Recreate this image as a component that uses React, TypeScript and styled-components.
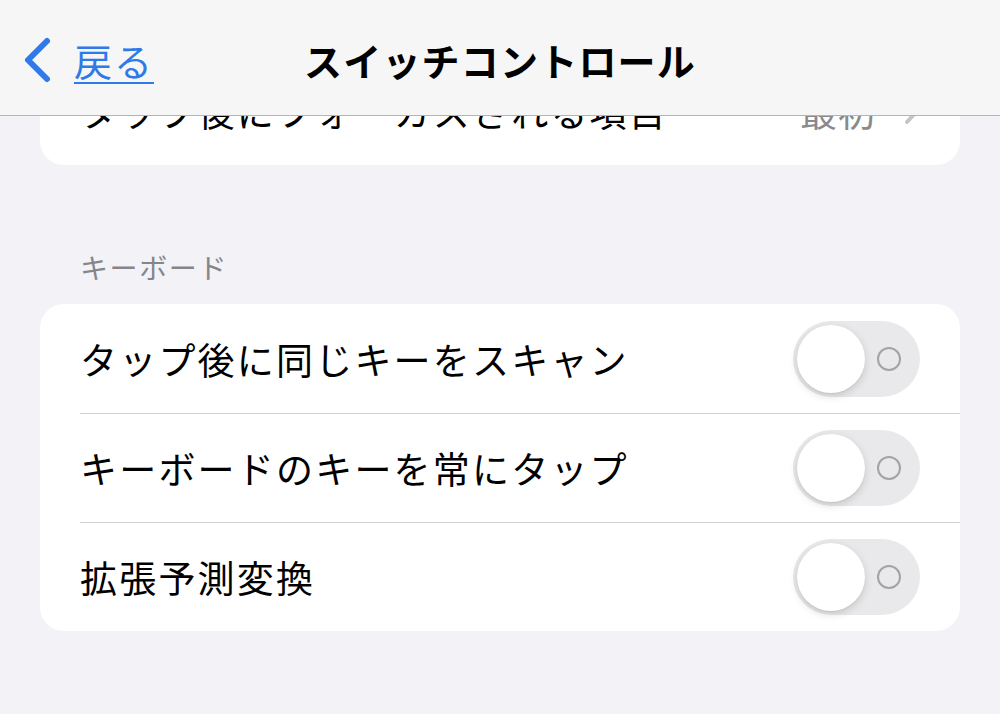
import styled, { createGlobalStyle } from "styled-components";

const GlobalStyle = createGlobalStyle`
  html, body {
    margin: 0;
    padding: 0;
    background: #f2f2f7;
    font-family: "Noto Sans CJK JP", "Noto Sans", sans-serif;
    -webkit-font-smoothing: antialiased;
  }
`;

const Page = styled.div`
  min-height: 714px;
  padding: 56px 40px 0;
  box-sizing: border-box;
`;

const NavBar = styled.header`
  position: fixed;
  top: 0;
  left: 0;
  right: 0;
  height: 116px;
  padding-top: 4px;
  box-sizing: border-box;
  display: grid;
  grid-template-columns: 1fr auto 1fr;
  align-items: center;
  background: #f6f6f6;
  border-bottom: 1px solid #b4b4b4;
  z-index: 10;
`;

const BackButton = styled.a`
  display: flex;
  align-items: center;
  gap: 22px;
  padding-left: 22px;
  color: #2f7ae8;
  font-size: 38px;
  letter-spacing: 2px;
  line-height: 1;
`;

const BackLabel = styled.span`
  text-decoration: underline;
  text-decoration-thickness: 2px;
  text-underline-offset: 6px;
`;

const Title = styled.h1`
  margin: 0;
  font-size: 38px;
  font-weight: 700;
  letter-spacing: 1.2px;
  color: #000;
`;

const Card = styled.section`
  background: #fff;
  border-radius: 24px;
  overflow: hidden;
`;

const Row = styled.div<{ divider?: boolean }>`
  position: relative;
  height: 109px;
  display: flex;
  align-items: center;
  justify-content: space-between;
  padding: 0 40px;
  box-sizing: border-box;

  ${(p) =>
    p.divider &&
    `
    &::before {
      content: "";
      position: absolute;
      top: 0;
      left: 40px;
      right: 0;
      height: 1px;
      background: #d1d1d6;
    }
  `}
`;

const Label = styled.span`
  font-size: 37px;
  letter-spacing: 2.2px;
  color: #000;
`;

const Value = styled.span`
  display: flex;
  align-items: center;
  gap: 28px;
  font-size: 37px;
  letter-spacing: 1px;
  color: #8a8a8e;
`;

const SectionHeader = styled.h2`
  margin: 84px 0 19px;
  padding-left: 40px;
  font-size: 28px;
  font-weight: 400;
  letter-spacing: 1.6px;
  line-height: 36px;
  color: #85858a;
`;

const Track = styled.span`
  position: relative;
  width: 127px;
  height: 76px;
  border-radius: 38px;
  background: #e9e9eb;
  flex-shrink: 0;
`;

const Knob = styled.span`
  position: absolute;
  top: 4px;
  left: 4px;
  width: 68px;
  height: 68px;
  border-radius: 50%;
  background: #fff;
  box-shadow: 0 3px 8px rgba(0, 0, 0, 0.15), 0 1px 1px rgba(0, 0, 0, 0.06);
`;

const OffMark = styled.span`
  position: absolute;
  top: 26px;
  right: 19px;
  width: 20px;
  height: 20px;
  border-radius: 50%;
  border: 2px solid #a3a3a6;
`;

const Toggle = () => (
  <Track>
    <OffMark />
    <Knob />
  </Track>
);

const BackChevron = () => (
  <svg width="30" height="48" viewBox="0 0 30 48">
    <path
      d="M25 5 L6 24 L25 43"
      fill="none"
      stroke="#2f7ae8"
      strokeWidth="6"
      strokeLinecap="round"
      strokeLinejoin="round"
    />
  </svg>
);

const RowChevron = () => (
  <svg width="16" height="28" viewBox="0 0 16 28">
    <path
      d="M3 3 L13 14 L3 25"
      fill="none"
      stroke="#c4c4c7"
      strokeWidth="4"
      strokeLinecap="round"
      strokeLinejoin="round"
    />
  </svg>
);

const keyboardItems = [
  "タップ後に同じキーをスキャン",
  "キーボードのキーを常にタップ",
  "拡張予測変換",
];

const App = () => {
  return (
    <>
      <GlobalStyle />
      <NavBar>
        <BackButton>
          <BackChevron />
          <BackLabel>戻る</BackLabel>
        </BackButton>
        <Title>スイッチコントロール</Title>
        <div />
      </NavBar>
      <Page>
        <Card>
          <Row>
            <Label>タップ後にフォーカスされる項目</Label>
            <Value>
              最初
              <RowChevron />
            </Value>
          </Row>
        </Card>
        <SectionHeader>キーボード</SectionHeader>
        <Card>
          {keyboardItems.map((item, i) => (
            <Row key={item} divider={i > 0}>
              <Label>{item}</Label>
              <Toggle />
            </Row>
          ))}
        </Card>
      </Page>
    </>
  );
};

export default App;
